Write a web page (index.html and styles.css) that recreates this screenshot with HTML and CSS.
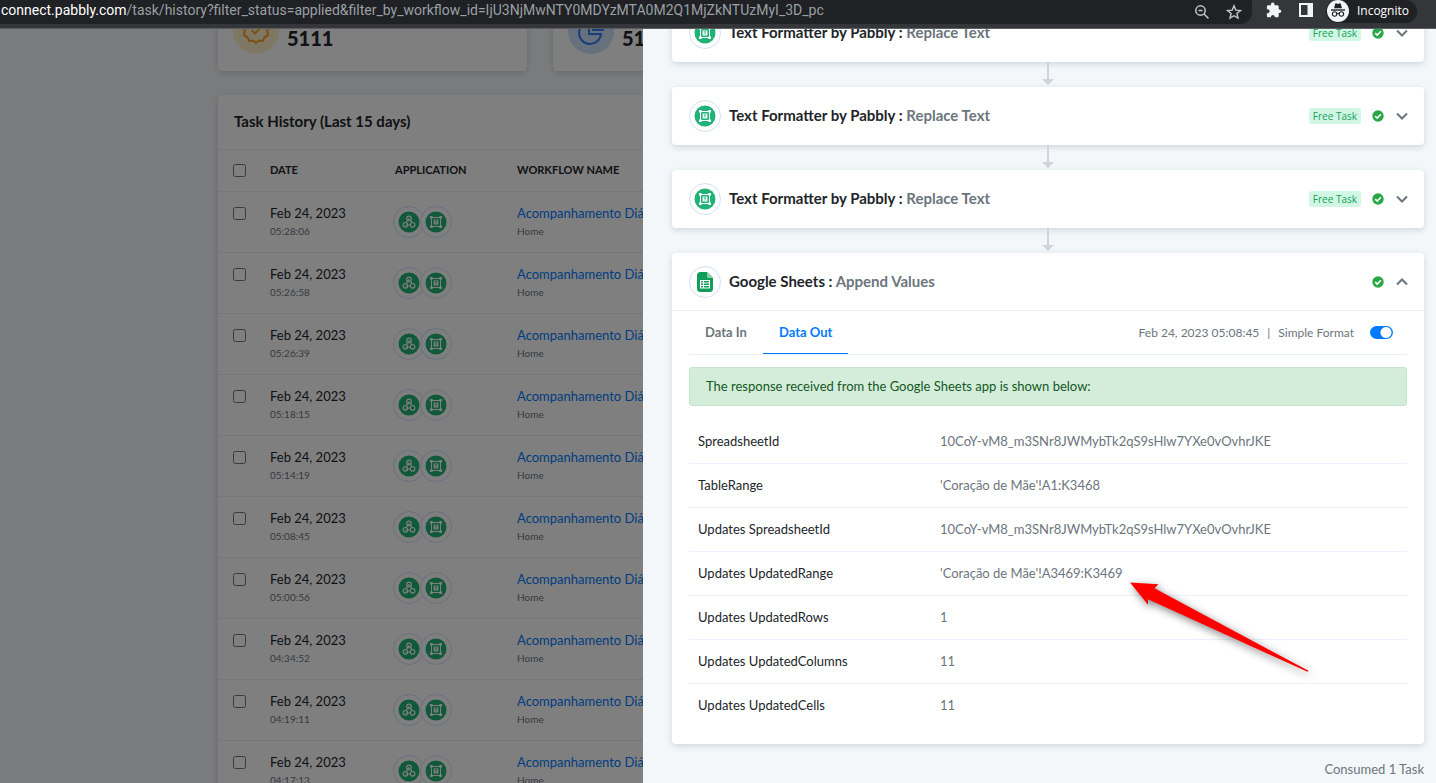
FILE: index.html
```html
<!DOCTYPE html>
<html lang="en">
<head>
  <meta charset="UTF-8">
  <meta name="viewport" content="width=device-width, initial-scale=1.0">
  <title>Task History</title>
  <link rel="stylesheet" href="styles.css">
</head>
<body>
  <!-- shared icons -->
  <svg class="sprite" aria-hidden="true">
    <symbol id="i-format" viewBox="0 0 22 22">
      <circle cx="11" cy="11" r="10.5" fill="#20b276"/>
      <g fill="none" stroke="#fff" stroke-width="1"><path d="M6.5 6.5h9v9h-9z"/></g>
      <path fill="#fff" d="M5 5h2.6v2.6H5zM14.4 5H17v2.6h-2.6zM5 14.4h2.6V17H5zM14.4 14.4H17V17h-2.6zM8.6 8.4h4.8v5.2H8.6z"/>
      <path d="M9.8 9.8h2.4M11 9.8v2.8" stroke="#20b276" stroke-width=".8"/>
    </symbol>
    <symbol id="i-hook" viewBox="0 0 22 22">
      <circle cx="11" cy="11" r="10.5" fill="#20b276"/>
      <g fill="none" stroke="#fff" stroke-width="1.1">
        <circle cx="11" cy="7.4" r="2.3"/><circle cx="7.4" cy="13.8" r="2.3"/><circle cx="14.6" cy="13.8" r="2.3"/>
        <path d="M10.8 7.4l-2.6 4.4M11.6 7.8l2.4 4M7.4 14h5"/>
      </g>
    </symbol>
    <symbol id="i-sheets" viewBox="0 0 22 22">
      <path fill="#0f9d58" d="M6.500 1H13l6 6v10.500A3.500 3.500 0 0 1 15.500 21h-9A3.500 3.500 0 0 1 3 17.500v-13A3.500 3.500 0 0 1 6.500 1z"/>
      <path fill="#87ceac" d="M13 1l6 6h-4.500A1.500 1.500 0 0 1 13 5.500z"/>
      <path fill="none" stroke="#fff" stroke-width="1.100" d="M6.500 9.500h9v7.500h-9zM6.500 12h9M6.500 14.500h9M9.500 9.500v7.500"/>
    </symbol>
    <symbol id="i-check" viewBox="0 0 12 12">
      <circle cx="6" cy="6" r="5.700" fill="#28a745"/>
      <path d="M3.200 6.100l2 2 3.700-3.800" fill="none" stroke="#fff" stroke-width="1.600"/>
    </symbol>
    <symbol id="i-down" viewBox="0 0 12 8">
      <path d="M1 1.500l5 5 5-5" fill="none" stroke="#6c757d" stroke-width="2"/>
    </symbol>
  </svg>

  <header class="browser-bar">
    <div class="address">
      <div class="url"><span class="host">connect.pabbly.com</span>/task/history?filter_status=applied&amp;filter_by_workflow_id=IjU3NjMwNTY0MDYzMTA0M2Q1MjZkNTUzMyI_3D_pc</div>
      <button class="bar-button" aria-label="Zoom">
        <svg width="16" height="16" viewBox="0 0 16 16" fill="none" stroke="#c4c7ca" stroke-width="1.500"><circle cx="6.500" cy="6.500" r="4.700"/><path d="M10 10l4.500 4.500M4.500 6.500h4"/></svg>
      </button>
      <button class="bar-button" aria-label="Bookmark">
        <svg width="16" height="16" viewBox="0 0 16 16" fill="none" stroke="#c4c7ca" stroke-width="1.400"><path d="M8 1.800l1.800 4.300 4.700.4-3.600 3 1.100 4.600L8 11.700l-4 2.400 1.100-4.600-3.600-3 4.700-.4z"/></svg>
      </button>
    </div>
    <button class="bar-button" aria-label="Extensions">
      <svg width="16" height="16" viewBox="0 0 16 16" fill="#f1f3f4"><path d="M13.500 7.500h-.8V4.600c0-.8-.6-1.400-1.400-1.400H8.500v-.8a1.800 1.800 0 0 0-3.600 0v.8H2.200C1.500 3.200.9 3.800.9 4.600v2.600h.7a2 2 0 0 1 0 4H.9v2.700c0 .8.600 1.400 1.300 1.400h2.700v-.8a2 2 0 0 1 3.900 0v.8h2.500c.8 0 1.400-.6 1.400-1.400v-2.800h.8a1.800 1.800 0 0 0 0-3.600z"/></svg>
    </button>
    <button class="bar-button" aria-label="Side panel">
      <svg width="16" height="16" viewBox="0 0 16 16"><path d="M2 2h12v12H2z" fill="none" stroke="#f1f3f4" stroke-width="2"/><path d="M9.500 2H14v12H9.500z" fill="#f1f3f4"/></svg>
    </button>
    <button class="incognito">
      <svg width="22" height="22" viewBox="0 0 22 22"><circle cx="11" cy="11" r="11" fill="#f1f3f4"/><path d="M7 8.300l1.200-4.500q.2-.7.900-.5l1.900.6 1.900-.6q.7-.2.900.5L15 8.300z" fill="#202124"/><path d="M4 10h14" stroke="#202124" stroke-width="1.400"/><g fill="none" stroke="#202124" stroke-width="1.100"><circle cx="7.600" cy="14" r="2.200"/><circle cx="14.400" cy="14" r="2.200"/><path d="M9.800 13.700q1.200-.8 2.400 0"/></g></svg>
      Incognito
    </button>
  </header>

  <div class="app">
    <main class="page">
      <section class="stats">
        <div class="card stat">
          <span class="stat-icon stat-orange">
            <svg width="28" height="28" viewBox="0 0 28 28" fill="none" stroke="#f9a02c" stroke-width="2" stroke-linejoin="round"><path d="M14 2l3 2.400 3.800-.4 1.500 3.600L26 9.800l-.8 4.200.8 4.200-3.700 2.200-1.500 3.600-3.800-.4L14 26l-3-2.400-3.800.4-1.500-3.600L2 18.200l.8-4.200L2 9.800l3.700-2.200L7.200 4l3.800.4z"/><path d="M9.500 13l3.500 3.500 6-6.500"/></svg>
          </span>
          <strong>5111</strong>
        </div>
        <div class="card stat">
          <span class="stat-icon stat-blue">
            <svg width="28" height="28" viewBox="0 0 28 28" fill="none" stroke="#2f7df6" stroke-width="2"><path d="M12 5a11 11 0 1 0 12 12H12z"/><path d="M16 2v11h11"/></svg>
          </span>
          <strong>51</strong>
        </div>
      </section>

      <section class="card history">
        <h2>Task History (Last 15 days)</h2>
        <table class="history-table">
          <thead>
            <tr>
              <th class="col-check"><input type="checkbox" aria-label="Select all"></th>
              <th class="col-date">DATE</th>
              <th class="col-app">APPLICATION</th>
              <th>WORKFLOW NAME</th>
            </tr>
          </thead>
          <tbody id="historyList"></tbody>
        </table>
      </section>
    </main>

    <div class="backdrop"></div>

    <aside class="drawer">
      <article class="card step">
        <div class="step-head">
          <span class="app-icon"><svg><use href="#i-format"/></svg></span>
          <h3>Text Formatter by Pabbly : <span>Replace Text</span></h3>
          <span class="badge">Free Task</span>
          <svg class="check"><use href="#i-check"/></svg>
          <button class="toggle" aria-label="Expand"><svg><use href="#i-down"/></svg></button>
        </div>
      </article>
      <svg class="connector" viewBox="0 0 12 25"><path d="M6 0v18" stroke="#cfd4dc" stroke-width="2"/><path d="M0 17h12l-6 6z" fill="#cfd4dc"/></svg>
      <article class="card step">
        <div class="step-head">
          <span class="app-icon"><svg><use href="#i-format"/></svg></span>
          <h3>Text Formatter by Pabbly : <span>Replace Text</span></h3>
          <span class="badge">Free Task</span>
          <svg class="check"><use href="#i-check"/></svg>
          <button class="toggle" aria-label="Expand"><svg><use href="#i-down"/></svg></button>
        </div>
      </article>
      <svg class="connector" viewBox="0 0 12 25"><path d="M6 0v18" stroke="#cfd4dc" stroke-width="2"/><path d="M0 17h12l-6 6z" fill="#cfd4dc"/></svg>
      <article class="card step">
        <div class="step-head">
          <span class="app-icon"><svg><use href="#i-format"/></svg></span>
          <h3>Text Formatter by Pabbly : <span>Replace Text</span></h3>
          <span class="badge">Free Task</span>
          <svg class="check"><use href="#i-check"/></svg>
          <button class="toggle" aria-label="Expand"><svg><use href="#i-down"/></svg></button>
        </div>
      </article>
      <svg class="connector" viewBox="0 0 12 25"><path d="M6 0v18" stroke="#cfd4dc" stroke-width="2"/><path d="M0 17h12l-6 6z" fill="#cfd4dc"/></svg>

      <article class="card step">
        <div class="step-head open">
          <span class="app-icon"><svg><use href="#i-sheets"/></svg></span>
          <h3>Google Sheets : <span>Append Values</span></h3>
          <svg class="check"><use href="#i-check"/></svg>
          <button class="toggle up" aria-label="Collapse"><svg><use href="#i-down"/></svg></button>
        </div>
        <div class="step-body">
          <div class="tabs">
            <button class="tab">Data In</button>
            <button class="tab active">Data Out</button>
            <div class="tab-info">
              <span>Feb 24, 2023 05:08:45</span>
              <span>|</span>
              <label for="simpleFormat">Simple Format</label>
              <input type="checkbox" class="switch" id="simpleFormat" checked>
            </div>
          </div>
          <p class="alert">The response received from the Google Sheets app is shown below:</p>
          <table class="result">
            <tr><th>SpreadsheetId</th><td>10CoY-vM8_m3SNr8JWMybTk2qS9sHlw7YXe0vOvhrJKE</td></tr>
            <tr><th>TableRange</th><td>'Coração de Mãe'!A1:K3468</td></tr>
            <tr><th>Updates SpreadsheetId</th><td>10CoY-vM8_m3SNr8JWMybTk2qS9sHlw7YXe0vOvhrJKE</td></tr>
            <tr>
              <th>Updates UpdatedRange</th>
              <td class="marked">'Coração de Mãe'!A3469:K3469
                <svg class="arrow" viewBox="0 0 190 100"><path d="M2 1.500l28.500 1.800-4 4 154 82.500-1 1L20 18.300v5.400z" fill="#f00"/></svg>
              </td>
            </tr>
            <tr><th>Updates UpdatedRows</th><td>1</td></tr>
            <tr><th>Updates UpdatedColumns</th><td>11</td></tr>
            <tr><th>Updates UpdatedCells</th><td>11</td></tr>
          </table>
        </div>
      </article>
      <p class="consumed">Consumed 1 Task</p>
    </aside>
  </div>

  <script>
    const times = ["05:28:06", "05:26:58", "05:26:39", "05:18:15", "05:14:19", "05:08:45", "05:00:56", "04:34:52", "04:19:11", "04:17:13"];
    const historyList = document.getElementById("historyList");

    times.forEach((time) => {
      const row = `<tr>
                    <td><input type="checkbox" aria-label="Select task ${time}"></td>
                    <td>Feb 24, 2023<small>${time}</small></td>
                    <td class="apps">
                      <div class="app-pair">
                        <span class="app-icon"><svg><use href="#i-hook"/></svg></span>
                        <span class="app-icon"><svg><use href="#i-format"/></svg></span>
                      </div>
                    </td>
                    <td><a href="#">Acompanhamento Diá</a><small>Home</small></td>
                  </tr>`;
      historyList.insertAdjacentHTML("beforeend", row);
    });
  </script>
</body>
</html>
```

FILE: styles.css
```css
* {
  box-sizing: border-box;
}

body {
  margin: 0;
  height: 100vh;
  display: flex;
  flex-direction: column;
  overflow: hidden;
  font-family: Lato, "Liberation Sans", sans-serif;
  font-size: 13px;
  color: #212529;
  background-color: #f3f7fa;
}

h2, h3, p {
  margin: 0;
}

button {
  font-family: inherit;
  border: none;
  background: none;
  padding: 0;
  cursor: pointer;
}

.sprite {
  display: none;
}

/* browser bar */
.browser-bar {
  flex: none;
  display: flex;
  align-items: flex-start;
  height: 29px;
  padding-right: 19px;
  background-color: #35363a;
  border-bottom: 1px solid #5c5d61;
  font-family: "Open Sans", "Noto Sans", sans-serif;
}

.address {
  flex: 1;
  display: flex;
  align-items: center;
  height: 24px;
  padding-right: 10px;
  margin-right: 14px;
  background-color: #202124;
  border-radius: 0 0 12px 0;
}

.url {
  flex: 1;
  padding: 0 0 4px 1px;
  font-family: Roboto, "Open Sans", sans-serif;
  font-size: 14px;
  line-height: 20px;
  white-space: nowrap;
  color: #9aa0a6;
}

.host {
  color: #fff;
}

.bar-button {
  width: 16px;
  height: 20px;
  margin-right: 16px;
}

.address .bar-button:last-child {
  margin-right: 0;
}

.bar-button svg {
  display: block;
}

.incognito {
  display: flex;
  align-items: center;
  gap: 8px;
  height: 23px;
  padding: 0 8px 2px 1px;
  margin-left: -4px;
  border-radius: 12px;
  background-color: #202124;
  color: #fff;
  font-size: 12px;
}

/* page behind the drawer */
.app {
  flex: 1;
  position: relative;
  overflow: hidden;
}

.page {
  margin: -38px 24px 0 218px;
}

.card {
  background-color: #fff;
  border-radius: 4px;
  box-shadow: 0 2px 6px rgba(60, 80, 100, 0.2);
}

.stats {
  display: grid;
  grid-template-columns: 309px 309px;
  gap: 26px;
  margin-bottom: 24px;
}

.stat {
  display: flex;
  align-items: center;
  gap: 8px;
  height: 80px;
  padding: 0 15px;
  font-size: 20px;
}

.stat strong {
  padding-top: 14px;
  font-weight: 900;
}

.stat-icon {
  display: flex;
  align-items: center;
  justify-content: center;
  width: 46px;
  height: 46px;
  border-radius: 50%;
}

.stat-orange {
  background-color: #fdefc8;
}

.stat-blue {
  background-color: #cfe0fb;
}

.history h2 {
  padding: 16px 16px 18px;
  font-size: 15px;
  line-height: 20px;
}

table {
  width: 100%;
  border-collapse: collapse;
}

.history-table {
  table-layout: fixed;
}

.history-table th,
.history-table td {
  padding: 11px 8px 13px;
  border-top: 1px solid #e6effb;
  text-align: left;
  vertical-align: top;
  line-height: 20px;
}

.history-table th {
  padding: 10px 8px;
  font-size: 11px;
}

.history-table .col-check {
  width: 44px;
}

.history-table th:first-child,
.history-table td:first-child {
  padding-left: 15px;
}

.col-date {
  width: 125px;
}

.col-app {
  width: 122px;
}

.history-table input {
  display: block;
  width: 13px;
  height: 13px;
  margin: 4px 0;
}

.history-table small {
  display: block;
  font-size: 10px;
  line-height: 16px;
  color: #6c757d;
}

.history-table a {
  color: #007bff;
  text-decoration: none;
  white-space: nowrap;
}

.history-table .apps {
  padding: 14px 6px;
}

.app-pair {
  display: flex;
}

.app-icon {
  flex: none;
  display: flex;
  align-items: center;
  justify-content: center;
  width: 32px;
  height: 32px;
  border: 1px solid #d3e0fb;
  border-radius: 50%;
  background-color: #fff;
}

.app-icon svg {
  width: 22px;
  height: 22px;
}

.app-icon + .app-icon {
  margin-left: -5px;
}

.backdrop {
  position: absolute;
  inset: 0;
  background-color: rgba(0, 0, 0, 0.5);
}

/* task details drawer */
.drawer {
  position: absolute;
  top: 0;
  right: 0;
  bottom: 0;
  left: 643px;
  display: flex;
  flex-direction: column;
  justify-content: flex-end;
  padding: 0 12px 5px 29px;
  background-color: #f3f7fa;
}

.step-head {
  display: flex;
  align-items: center;
  height: 58px;
  padding: 0 16px 0 17px;
}

.step-head.open {
  border-bottom: 1px solid #e9f2fc;
}

.step-head h3 {
  flex: 1;
  margin-left: 8px;
  padding-bottom: 2px;
  font-size: 15px;
  line-height: 20px;
}

.step-head h3 span {
  color: #6c757d;
}

.badge {
  padding: 0 4px;
  border-radius: 3px;
  background-color: #d1f7e4;
  color: #12a05c;
  font-family: "Open Sans", "Noto Sans", sans-serif;
  font-size: 10px;
  line-height: 16px;
}

.check {
  width: 12px;
  height: 12px;
  margin: 0 12px 0 11px;
}

.toggle svg {
  display: block;
  width: 12px;
  height: 8px;
}

.toggle.up svg {
  transform: rotate(180deg);
}

.connector {
  flex: none;
  align-self: center;
  width: 12px;
  height: 25px;
}

.step-body {
  padding: 0 17px 17px;
}

.tabs {
  display: flex;
  height: 44px;
  margin-bottom: 12px;
  border-bottom: 1px solid #e9f2fc;
}

.tab {
  padding: 0 16px;
  font-size: 13px;
  font-weight: 700;
  color: #6c757d;
  border-bottom: 1px solid transparent;
}

.tab.active {
  color: #007bff;
  border-bottom-color: #007bff;
}

.tab-info {
  flex: 1;
  display: flex;
  align-items: center;
  justify-content: flex-end;
  gap: 8px;
  padding-right: 14px;
  font-size: 12px;
  color: #6c757d;
}

.switch {
  appearance: none;
  width: 23px;
  height: 13px;
  margin: 0 0 0 8px;
  border-radius: 7px;
  background: radial-gradient(circle at 16px 50%, #fff 5px, #007bff 6px);
}

.alert {
  padding: 9px 16px;
  border: 1px solid #c3e6cb;
  border-radius: 3px;
  background-color: #d4edda;
  color: #155724;
  line-height: 19px;
  margin-bottom: 13px;
}

.result th,
.result td {
  height: 44px;
  padding: 0 9px;
  border-bottom: 1px solid #e9f2fc;
  font-weight: 400;
  text-align: left;
}

.result th {
  width: 242px;
}

.result td {
  color: #6c757d;
}

.result tr:last-child th,
.result tr:last-child td {
  border-bottom: none;
}

.marked {
  position: relative;
}

/* pointer drawn over the updated range */
.arrow {
  position: absolute;
  top: 29px;
  left: 197px;
  width: 190px;
  height: 100px;
  overflow: visible;
  filter: drop-shadow(2px 3px 4px rgba(0, 0, 0, 0.5));
}

.consumed {
  padding-top: 16px;
  line-height: 18px;
  text-align: right;
  color: #6c757d;
}
```
